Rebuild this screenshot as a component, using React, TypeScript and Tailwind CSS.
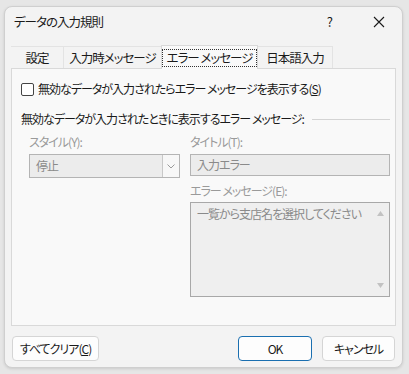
import React from 'react';

const jp = "font-['Noto_Sans_CJK_JP','Noto_Sans',sans-serif] [font-feature-settings:'palt']";

export default function App() {
  return (
    <div className={`${jp} h-[374px] w-[409px] bg-[#e6e6e6] pb-[6px] pl-[4px] pr-[6px] pt-[6px] text-[12px] leading-[18px] tracking-[-1px] text-[#1a1a1a]`}>
      <div className="flex h-full flex-col rounded-[8px] border border-[#cfcfcf] bg-[#f3f3f3] shadow-[0_1px_3px_rgba(0,0,0,0.12)]">
        {/* title bar */}
        <div className="flex h-[28px] items-center pl-[9px] pt-[2px]">
          <span className="text-[12.5px]">データの入力規則</span>
          <span className="ml-auto mr-[41px] text-[13px]">?</span>
          <svg width="12" height="12" viewBox="0 0 12 12" className="mr-[17px]">
            <path d="M1 1 L11 11 M11 1 L1 11" stroke="#1a1a1a" strokeWidth="1.1" />
          </svg>
        </div>

        {/* tabs */}
        <div className="mt-[10px] flex items-end whitespace-nowrap pl-[6px] text-[12.5px]">
          <div className="flex h-[22px] w-[53px] items-center justify-center border-r border-t border-[#e3e3e3] bg-[#f3f3f3]">設定</div>
          <div className="flex h-[22px] w-[97px] items-center justify-center border-t border-[#e3e3e3] bg-[#f3f3f3]">入力時メッセージ</div>
          <div className="relative z-10 -mb-px flex h-[24px] w-[97px] items-center justify-center border border-b-0 border-[#d9d9d9] bg-[#f9f9f9]">
            <span className="border border-dotted border-[#333] px-[4px] leading-[16px]">エラー メッセージ</span>
          </div>
          <div className="flex h-[22px] w-[75px] items-center justify-center border-r border-t border-[#e3e3e3] bg-[#f3f3f3]">日本語入力</div>
        </div>

        {/* panel */}
        <div className="mx-[6px] flex h-[258px] flex-col whitespace-nowrap border border-[#d9d9d9] bg-[#f9f9f9] pl-[9px] pr-[5px] pt-[11px]">
          <label className="flex h-[18px] items-center gap-[4px]">
            <span className="h-[13px] w-[13px] shrink-0 rounded-[2px] border border-[#444] bg-white" />
            <span>
              無効なデータが入力されたらエラー メッセージを表示する(<span className="underline">S</span>)
            </span>
          </label>

          <div className="mt-[12px] flex h-[18px] items-center">
            <span>無効なデータが入力されたときに表示するエラー メッセージ:</span>
            <div className="ml-[8px] h-px flex-1 bg-[#d4d4d4]" />
          </div>

          <div className="mt-[5px] flex gap-[10px] pl-[8px]">
            <div className="w-[151px] text-[#9a9a9a]">
              <div>スタイル(Y):</div>
              <div className="mt-[3px] flex h-[24px] items-stretch border border-[#b4b4b4] bg-[#ececec]">
                <span className="flex flex-1 items-center pl-[6px] text-[#8a8a8a]">停止</span>
                <span className="flex w-[17px] items-center justify-center border-l border-[#c8c8c8] bg-[#f7f7f7]">
                  <svg width="8" height="5" viewBox="0 0 8 5">
                    <path d="M0.5 0.5 L4 4 L7.5 0.5" stroke="#9a9a9a" fill="none" strokeWidth="1" />
                  </svg>
                </span>
              </div>
            </div>

            <div className="flex-1 text-[#9a9a9a]">
              <div>タイトル(T):</div>
              <div className="mt-[3px] flex h-[22px] items-center border border-[#b4b4b4] bg-[#ececec] pl-[6px] text-[#8a8a8a]">
                入力エラー
              </div>
              <div className="mt-[6px]">エラー メッセージ(E):</div>
              <div className="mt-[2px] flex h-[95px] border border-[#a8a8a8] bg-[#efefef]">
                <span className="flex-1 pl-[6px] pt-[2px] text-[#8a8a8a]">一覧から支店名を選択してください</span>
                <div className="flex w-[17px] flex-col items-center justify-between py-[8px]">
                  <svg width="7" height="5" viewBox="0 0 7 5"><path d="M0 5 L3.5 0 L7 5 Z" fill="#c2c2c2" /></svg>
                  <svg width="7" height="5" viewBox="0 0 7 5"><path d="M0 0 L3.5 5 L7 0 Z" fill="#c2c2c2" /></svg>
                </div>
              </div>
            </div>
          </div>
        </div>

        {/* footer */}
        <div className="mt-[10px] flex items-center whitespace-nowrap pl-[7px] pr-[7px]">
          <button className="flex h-[25px] w-[87px] items-center justify-center rounded-[4px] border border-[#d5d5d5] bg-[#fdfdfd]">
            すべてクリア(<span className="underline">C</span>)
          </button>
          <button className="ml-auto flex h-[25px] w-[74px] items-center justify-center rounded-[4px] border border-[#1a6fb0] bg-[#fdfdfd]">
            OK
          </button>
          <button className="ml-[10px] flex h-[25px] w-[73px] items-center justify-center rounded-[4px] border border-[#d5d5d5] bg-[#fdfdfd]">
            キャンセル
          </button>
        </div>
      </div>
    </div>
  );
}
